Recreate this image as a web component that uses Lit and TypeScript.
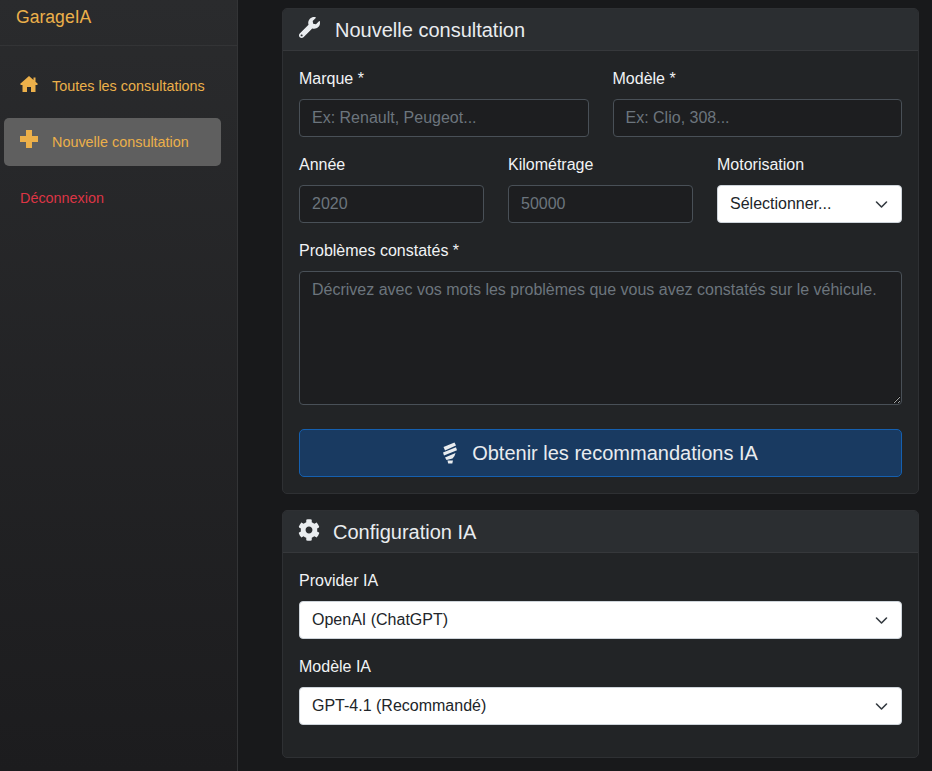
import { css, html, LitElement, svg } from "lit";
import { customElement } from "lit/decorators.js";

const icons = {
  wrench: "M507.73 109.1c-2.24-9.03-13.54-12.09-20.12-5.51l-74.36 74.36-67.88-11.31-11.31-67.88 74.36-74.36c6.62-6.62 3.43-17.9-5.66-20.16-47.38-11.74-99.55.91-136.58 37.93-39.64 39.64-50.55 97.1-34.05 147.2L18.74 402.76c-24.99 24.99-24.99 65.51 0 90.5 24.99 24.99 65.51 24.99 90.5 0l213.21-213.21c50.12 16.71 107.47 5.68 147.37-34.22 37.07-37.07 49.7-89.32 37.91-136.73zM64 472c-13.25 0-24-10.75-24-24 0-13.26 10.75-24 24-24s24 10.74 24 24c0 13.25-10.75 24-24 24z",
  cog: "M487.4 315.7l-42.6-24.6c4.3-23.2 4.3-47 0-70.2l42.6-24.6c4.9-2.8 7.1-8.6 5.5-14-11.1-35.6-30-67.8-54.7-94.6-3.8-4.1-10-5.1-14.8-2.3L380.8 110c-17.9-15.4-38.5-27.3-60.8-35.1V25.8c0-5.6-3.9-10.5-9.4-11.7-36.7-8.2-74.3-7.8-109.2 0-5.5 1.2-9.4 6.1-9.4 11.7V75c-22.2 7.9-42.8 19.8-60.8 35.1L88.7 85.5c-4.9-2.8-11-1.9-14.8 2.3-24.7 26.7-43.6 58.9-54.7 94.6-1.7 5.4.6 11.2 5.5 14L67.3 221c-4.3 23.2-4.3 47 0 70.2l-42.6 24.6c-4.9 2.8-7.1 8.6-5.5 14 11.1 35.6 30 67.8 54.7 94.6 3.8 4.1 10 5.1 14.8 2.3l42.6-24.6c17.9 15.4 38.5 27.3 60.8 35.1v49.2c0 5.6 3.9 10.5 9.4 11.7 36.7 8.2 74.3 7.8 109.2 0 5.5-1.2 9.4-6.1 9.4-11.7v-49.2c22.2-7.9 42.8-19.8 60.8-35.1l42.6 24.6c4.9 2.8 11 1.9 14.8-2.3 24.7-26.7 43.6-58.9 54.7-94.6 1.5-5.5-.7-11.3-5.6-14.1zM256 336c-44.1 0-80-35.9-80-80s35.9-80 80-80 80 35.9 80 80-35.9 80-80 80z",
} as const;

function icon(name: keyof typeof icons, cls: string) {
  return html`<svg class=${cls} viewBox="0 0 512 512" fill="currentColor">${svg`<path d=${icons[name]}></path>`}</svg>`;
}

@customElement("app-root")
export class AppRoot extends LitElement {
  static styles = css`
    :host {
      display: flex;
      height: 771px;
      overflow: hidden;
      font-family: "Liberation Sans", Arial, sans-serif;
      font-size: 16px;
      line-height: 24px;
      color: #dee2e6;
      background: #18191b;
    }
    * {
      box-sizing: border-box;
    }
    .sidebar {
      width: 238px;
      flex: none;
      border-right: 1px solid #333436;
      background: linear-gradient(#2a2b2d, #1c1c1e);
    }
    .brand {
      height: 46px;
      padding: 5px 16px 0;
      font-size: 17.6px;
      color: #ecb04a;
      border-bottom: 1px solid #333436;
    }
    .nav {
      display: flex;
      flex-direction: column;
      gap: 8px;
      padding: 16px 16px 0 4px;
    }
    .nav a {
      display: flex;
      align-items: center;
      height: 48px;
      padding-left: 16px;
      border-radius: 5px;
      font-size: 14.4px;
      color: #ecb04a;
    }
    .nav a.active {
      background: #5f5f5f;
    }
    .nav a.logout {
      color: #dc3545;
    }
    .home {
      width: 18px;
      height: 16px;
      margin: -4px 14px 0 0;
    }
    .plus {
      width: 18px;
      height: 18px;
      margin: -6px 14px 0 0;
    }
    .main {
      flex: 1;
      padding: 8px 13px 0 44px;
      min-width: 0;
    }
    .card {
      margin-bottom: 16px;
      border: 1px solid #2e3033;
      border-radius: 5px;
      background: #222426;
      overflow: hidden;
    }
    .card-header {
      display: flex;
      align-items: center;
      height: 42px;
      padding: 0 16px;
      border-bottom: 1px solid #36383b;
      background: #2b2e31;
      font-size: 20px;
      color: #e9ecef;
    }
    .head-icon {
      width: 21px;
      height: 21px;
      margin: -4px 15px 0 0;
    }
    .head-icon.cog {
      width: 22px;
      height: 22px;
      margin: -4px 13px 0 -1px;
    }
    .card-body {
      padding: 16px;
    }
    .row {
      display: grid;
      gap: 24px;
      margin-bottom: 16px;
    }
    .two {
      grid-template-columns: 1fr 1fr;
    }
    .three {
      grid-template-columns: 1fr 1fr 1fr;
    }
    .field {
      min-width: 0;
    }
    label {
      display: block;
      margin-bottom: 8px;
      color: #f1f3f5;
    }
    input,
    textarea,
    select {
      display: block;
      width: 100%;
      padding: 6px 12px;
      border: 1px solid #495057;
      border-radius: 4px;
      background: #1d1e20;
      color: #dee2e6;
      font: inherit;
      outline: none;
    }
    input {
      height: 38px;
    }
    textarea {
      height: 134px;
    }
    input::placeholder,
    textarea::placeholder {
      color: #6c757d;
      opacity: 1;
    }
    .select-wrap {
      position: relative;
    }
    select {
      height: 38px;
      appearance: none;
      background: #fff;
      border-color: #ced4da;
      color: #212529;
    }
    .chev {
      position: absolute;
      top: 13px;
      right: 14px;
      width: 13px;
      height: 12px;
      pointer-events: none;
      fill: none;
      stroke: #343a40;
      stroke-width: 1.6;
      stroke-linecap: round;
      stroke-linejoin: round;
    }
    .submit {
      display: flex;
      align-items: center;
      justify-content: center;
      width: 100%;
      height: 48px;
      margin-top: 24px;
      padding: 0 1px 0 0;
      border: 1px solid #1560b0;
      border-radius: 5px;
      background: #193a61;
      color: #e9ecef;
      font: inherit;
      font-size: 20px;
    }
    .bulb {
      width: 16px;
      height: 22px;
      margin-right: 14px;
    }
    .last {
      margin-bottom: 16px;
    }
    .field + .field.stack {
      margin-top: 16px;
    }
  `;

  private select(text: string) {
    return html`<div class="select-wrap">
      <select><option>${text}</option></select>
      <svg class="chev" viewBox="0 0 13 12"><path d="M1.5 4l5 5 5-5"></path></svg>
    </div>`;
  }

  render() {
    return html`
      <aside class="sidebar">
        <div class="brand">GarageIA</div>
        <nav class="nav">
          <a>
            <svg class="home" viewBox="0 0 18 16" fill="currentColor">
              <path d="M9 0l4.5 4V1.5h2v4.3L18 8l-1 1h-1.5v7H11v-5H7v5H2.500V9H1L0 8z"></path>
            </svg>
            Toutes les consultations
          </a>
          <a class="active">
            <svg class="plus" viewBox="0 0 18 18" fill="currentColor">
              <path d="M6 0h6v6h6v6h-6v6H6v-6H0V6h6z"></path>
            </svg>
            Nouvelle consultation
          </a>
          <a class="logout">Déconnexion</a>
        </nav>
      </aside>
      <main class="main">
        <section class="card">
          <div class="card-header">${icon("wrench", "head-icon")}Nouvelle consultation</div>
          <div class="card-body">
            <div class="row two">
              <div class="field"><label>Marque *</label><input placeholder="Ex: Renault, Peugeot..." /></div>
              <div class="field"><label>Modèle *</label><input placeholder="Ex: Clio, 308..." /></div>
            </div>
            <div class="row three">
              <div class="field"><label>Année</label><input placeholder="2020" /></div>
              <div class="field"><label>Kilométrage</label><input placeholder="50000" /></div>
              <div class="field"><label>Motorisation</label>${this.select("Sélectionner...")}</div>
            </div>
            <div class="field">
              <label>Problèmes constatés *</label>
              <textarea placeholder="Décrivez avec vos mots les problèmes que vous avez constatés sur le véhicule."></textarea>
            </div>
            <button class="submit">
              <svg class="bulb" viewBox="0 0 16 22" fill="currentColor">
                <path d="M1.500 5L12.500 .5l1.500 3L3 8.500z"></path>
                <path d="M1 10.500L14 5.200l1 3L2 13.500z"></path>
                <path d="M3 15.500l10.500-4.500-1 3-2 2.500-6 1.500z"></path>
                <path d="M5.500 18.500h5.500l-.7 3H6.200z"></path>
              </svg>
              Obtenir les recommandations IA
            </button>
          </div>
        </section>
        <section class="card">
          <div class="card-header">${icon("cog", "head-icon cog")}Configuration IA</div>
          <div class="card-body">
            <div class="field"><label>Provider IA</label>${this.select("OpenAI (ChatGPT)")}</div>
            <div class="field stack last"><label>Modèle IA</label>${this.select("GPT-4.1 (Recommandé)")}</div>
          </div>
        </section>
      </main>
    `;
  }
}
